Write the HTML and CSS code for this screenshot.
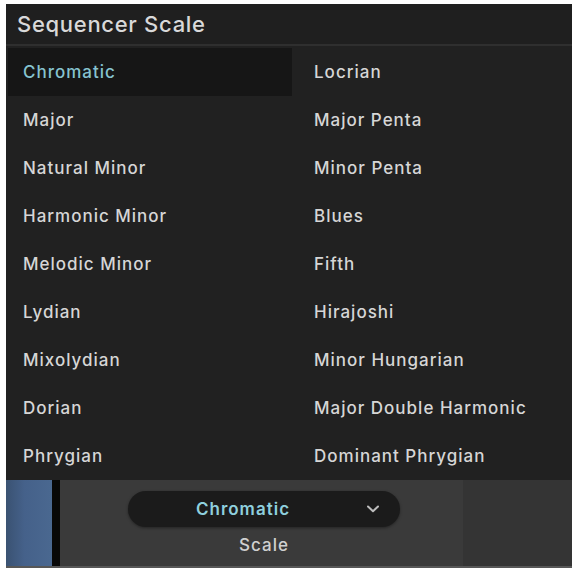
FILE: index.html
```html
<!DOCTYPE html>
<html>
<head>
<meta charset="utf-8">
<link rel="stylesheet" href="styles.css">
</head>
<body>
<div class="frame">
  <div class="header">Sequencer Scale</div>
  <div class="menu">
    <div class="col left">
      <div class="item selected">Chromatic</div>
      <div class="item">Major</div>
      <div class="item">Natural Minor</div>
      <div class="item">Harmonic Minor</div>
      <div class="item">Melodic Minor</div>
      <div class="item">Lydian</div>
      <div class="item">Mixolydian</div>
      <div class="item">Dorian</div>
      <div class="item">Phrygian</div>
    </div>
    <div class="col right">
      <div class="item">Locrian</div>
      <div class="item">Major Penta</div>
      <div class="item">Minor Penta</div>
      <div class="item">Blues</div>
      <div class="item">Fifth</div>
      <div class="item">Hirajoshi</div>
      <div class="item">Minor Hungarian</div>
      <div class="item">Major Double Harmonic</div>
      <div class="item">Dominant Phrygian</div>
    </div>
  </div>
  <div class="panel">
    <div class="strip"></div>
    <div class="divider"></div>
    <div class="control">
      <div class="dropdown">
        <span class="value">Chromatic</span>
        <svg class="chev" width="14" height="8" viewBox="0 0 14 8"><path d="M2 1.5 L7 6.2 L12 1.5" fill="none" stroke="#bdbdbd" stroke-width="2" stroke-linecap="round" stroke-linejoin="round"/></svg>
      </div>
      <div class="label">Scale</div>
    </div>
    <div class="side"></div>
  </div>
</div>
</body>
</html>
```
FILE: styles.css
```css
html, body {
  margin: 0;
  padding: 0;
  background: #ffffff;
}
body {
  font-family: Inter, "Liberation Sans", sans-serif;
  -webkit-font-smoothing: antialiased;
}
.frame {
  margin: 4px 0 0 6px;
  width: 566px;
  height: 564px;
  background: #202020;
  display: flex;
  flex-direction: column;
}
.header {
  box-sizing: border-box;
  height: 42px;
  padding-left: 11px;
  display: flex;
  align-items: center;
  font-size: 22px;
  font-weight: 500;
  letter-spacing: 0.7px;
  color: #d9d9d9;
  background: #1f1f1f;
  border-bottom: 2px solid #2f2f2f;
}
.menu {
  display: grid;
  grid-template-columns: 286px 1fr;
  padding-top: 2px;
  background: #212121;
}
.col {
  display: flex;
  flex-direction: column;
}
.col.left {
  padding-left: 2px;
}
.item {
  height: 48px;
  display: flex;
  align-items: center;
  font-size: 17px;
  font-weight: 500;
  letter-spacing: 1px;
  color: #d6d6d6;
}
.left .item {
  padding-left: 15px;
}
.right .item {
  padding-left: 22px;
}
.item.selected {
  background: #161616;
  color: #86c3d0;
}
.panel {
  flex: 1;
  display: flex;
  background: #3a3a3a;
  border-bottom: 2px solid #575757;
}
.strip {
  width: 46px;
  background: linear-gradient(90deg, #3a5272 0%, #45618a 40%, #4a6890 100%);
}
.divider {
  width: 8px;
  background: #080808;
}
.control {
  width: 403px;
  display: flex;
  flex-direction: column;
  align-items: flex-start;
  padding-top: 11px;
  box-sizing: border-box;
}
.dropdown {
  margin-left: 68px;
  width: 272px;
  height: 36px;
  border-radius: 18px;
  background: #1b1b1b;
  display: flex;
  align-items: center;
  box-shadow: 0 1px 3px rgba(0,0,0,0.4);
}
.value {
  width: 230px;
  text-align: center;
  font-size: 17px;
  font-weight: 600;
  letter-spacing: 1px;
  color: #8fd0de;
}
.chev {
  margin-left: 8px;
}
.label {
  width: 272px;
  margin-left: 68px;
  margin-top: 8px;
  text-align: center;
  font-size: 17px;
  font-weight: 500;
  letter-spacing: 1px;
  color: #d0d0d0;
}
.side {
  flex: 1;
  background: #343434;
}
```
